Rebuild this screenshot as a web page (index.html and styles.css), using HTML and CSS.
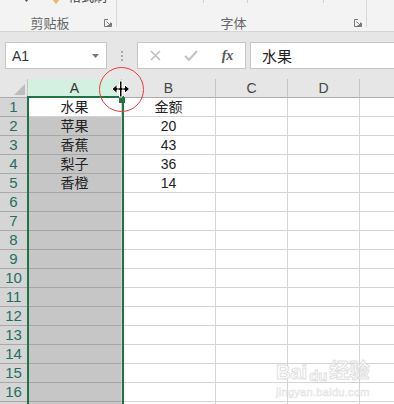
FILE: index.html
```html
<!DOCTYPE html>
<html lang="zh-CN">
  <head>
    <meta charset="UTF-8" />
    <meta name="viewport" content="width=device-width, initial-scale=1.0" />
    <title>Excel - 调整列宽</title>
    <link rel="stylesheet" href="styles.css">
  </head>
  <body>
    <div class="ribbon">
      <div class="group group-clip">
        <div class="group-top">
          <svg class="drop" width="5" height="3" viewBox="0 0 5 3"><polygon points="0,0 5,0 2.5,3" fill="#555"/></svg>
          <svg class="brush" width="8" height="6" viewBox="0 0 8 6"><polygon points="0,0 8,0 4,5" fill="#f2b65a"/></svg>
          <span class="top-label">格式刷</span>
        </div>
        <div class="group-foot">
          <span class="group-name">剪贴板</span>
          <span class="launcher">
            <svg width="8" height="8" viewBox="0 0 8 8"><path d="M0.5 4V0.5H4M0.5 4V7.5H7.5V4M2.5 2.5L6.5 6.5M6.5 3.5V6.5H3.5" fill="none" stroke="#777" stroke-width="1"/></svg>
          </span>
        </div>
      </div>
      <div class="group group-font">
        <div class="ticks">
          <span class="tick t1"></span>
          <span class="tick t2"></span>
          <span class="tick t3"></span>
        </div>
        <div class="group-foot">
          <span class="group-name">字体</span>
          <span class="launcher">
            <svg width="8" height="8" viewBox="0 0 8 8"><path d="M0.5 4V0.5H4M0.5 4V7.5H7.5V4M2.5 2.5L6.5 6.5M6.5 3.5V6.5H3.5" fill="none" stroke="#777" stroke-width="1"/></svg>
          </span>
        </div>
      </div>
    </div>

    <div class="formula-bar">
      <div class="name-box">
        <span>A1</span>
        <svg width="7" height="4" viewBox="0 0 7 4"><polygon points="0,0 7,0 3.5,4" fill="#777"/></svg>
      </div>
      <div class="splitter">
        <span class="dot"></span>
        <span class="dot"></span>
        <span class="dot"></span>
      </div>
      <div class="fx-buttons">
        <span class="fx-btn">
          <svg width="11" height="11" viewBox="0 0 11 11"><path d="M1 1L10 10M10 1L1 10" stroke="#bdbdbd" stroke-width="1.5"/></svg>
        </span>
        <span class="fx-btn">
          <svg width="14" height="11" viewBox="0 0 14 11"><polyline points="1,6 5,10 13,1" fill="none" stroke="#c2c2c2" stroke-width="2"/></svg>
        </span>
        <span class="fx-btn fx-label">fx</span>
      </div>
      <div class="formula-input">水果</div>
    </div>

    <div class="sheet">
      <div class="row head">
        <div class="cell rh corner">
          <svg width="11" height="11" viewBox="0 0 11 11"><polygon points="11,0 11,11 0,11" fill="#bdbdbd"/></svg>
        </div>
        <div class="cell col-a sel-head">A</div>
        <div class="cell col-b">B</div>
        <div class="cell col-c">C</div>
        <div class="cell col-d">D</div>
        <div class="cell col-e">E</div>
      </div>
      <div class="row">
        <div class="cell rh">1</div>
        <div class="cell col-a active">水果</div>
        <div class="cell col-b">金额</div>
        <div class="cell col-c"></div>
        <div class="cell col-d"></div>
        <div class="cell col-e"></div>
      </div>
      <div class="row">
        <div class="cell rh">2</div>
        <div class="cell col-a sel">苹果</div>
        <div class="cell col-b">20</div>
        <div class="cell col-c"></div>
        <div class="cell col-d"></div>
        <div class="cell col-e"></div>
      </div>
      <div class="row">
        <div class="cell rh">3</div>
        <div class="cell col-a sel">香蕉</div>
        <div class="cell col-b">43</div>
        <div class="cell col-c"></div>
        <div class="cell col-d"></div>
        <div class="cell col-e"></div>
      </div>
      <div class="row">
        <div class="cell rh">4</div>
        <div class="cell col-a sel">梨子</div>
        <div class="cell col-b">36</div>
        <div class="cell col-c"></div>
        <div class="cell col-d"></div>
        <div class="cell col-e"></div>
      </div>
      <div class="row">
        <div class="cell rh">5</div>
        <div class="cell col-a sel">香橙</div>
        <div class="cell col-b">14</div>
        <div class="cell col-c"></div>
        <div class="cell col-d"></div>
        <div class="cell col-e"></div>
      </div>
      <div class="row">
        <div class="cell rh">6</div>
        <div class="cell col-a sel"></div>
        <div class="cell col-b"></div>
        <div class="cell col-c"></div>
        <div class="cell col-d"></div>
        <div class="cell col-e"></div>
      </div>
      <div class="row">
        <div class="cell rh">7</div>
        <div class="cell col-a sel"></div>
        <div class="cell col-b"></div>
        <div class="cell col-c"></div>
        <div class="cell col-d"></div>
        <div class="cell col-e"></div>
      </div>
      <div class="row">
        <div class="cell rh">8</div>
        <div class="cell col-a sel"></div>
        <div class="cell col-b"></div>
        <div class="cell col-c"></div>
        <div class="cell col-d"></div>
        <div class="cell col-e"></div>
      </div>
      <div class="row">
        <div class="cell rh">9</div>
        <div class="cell col-a sel"></div>
        <div class="cell col-b"></div>
        <div class="cell col-c"></div>
        <div class="cell col-d"></div>
        <div class="cell col-e"></div>
      </div>
      <div class="row">
        <div class="cell rh">10</div>
        <div class="cell col-a sel"></div>
        <div class="cell col-b"></div>
        <div class="cell col-c"></div>
        <div class="cell col-d"></div>
        <div class="cell col-e"></div>
      </div>
      <div class="row">
        <div class="cell rh">11</div>
        <div class="cell col-a sel"></div>
        <div class="cell col-b"></div>
        <div class="cell col-c"></div>
        <div class="cell col-d"></div>
        <div class="cell col-e"></div>
      </div>
      <div class="row">
        <div class="cell rh">12</div>
        <div class="cell col-a sel"></div>
        <div class="cell col-b"></div>
        <div class="cell col-c"></div>
        <div class="cell col-d"></div>
        <div class="cell col-e"></div>
      </div>
      <div class="row">
        <div class="cell rh">13</div>
        <div class="cell col-a sel"></div>
        <div class="cell col-b"></div>
        <div class="cell col-c"></div>
        <div class="cell col-d"></div>
        <div class="cell col-e"></div>
      </div>
      <div class="row">
        <div class="cell rh">14</div>
        <div class="cell col-a sel"></div>
        <div class="cell col-b"></div>
        <div class="cell col-c"></div>
        <div class="cell col-d"></div>
        <div class="cell col-e"></div>
      </div>
      <div class="row">
        <div class="cell rh">15</div>
        <div class="cell col-a sel"></div>
        <div class="cell col-b"></div>
        <div class="cell col-c"></div>
        <div class="cell col-d"></div>
        <div class="cell col-e"></div>
      </div>
      <div class="row">
        <div class="cell rh">16</div>
        <div class="cell col-a sel"></div>
        <div class="cell col-b"></div>
        <div class="cell col-c"></div>
        <div class="cell col-d"></div>
        <div class="cell col-e"></div>
      </div>
      <div class="row">
        <div class="cell rh">17</div>
        <div class="cell col-a sel"></div>
        <div class="cell col-b"></div>
        <div class="cell col-c"></div>
        <div class="cell col-d"></div>
        <div class="cell col-e"></div>
      </div>

      <!-- selection outline over column A -->
      <div class="selection"></div>
      <div class="fill-handle"></div>

      <div class="watermark">
        <div class="wm-logo"><span>Bai</span><span class="wm-du">du</span><span>经验</span></div>
        <div class="wm-url">jingyan.baidu.com</div>
      </div>
    </div>

    <!-- annotation: resize cursor and red circle -->
    <div class="mark"></div>
    <svg class="resize-cursor" width="20" height="18" viewBox="0 0 20 18">
      <path d="M1 9L6 4.5V8H8.5V1H11V8H13.5V4.5L18.5 9L13.5 13.5V10H11V17H8.5V10H6V13.5Z" fill="#000" stroke="#fff" stroke-width="1"/>
    </svg>
  </body>
</html>
```

FILE: styles.css
```css
* {
  box-sizing: border-box;
}
body {
  margin: 0;
  width: 394px;
  height: 404px;
  overflow: hidden;
  position: relative;
  background: #e6e6e6;
  font-family: "Liberation Sans", "Noto Sans CJK SC", sans-serif;
  color: #222;
}

/* ribbon */
.ribbon {
  height: 32px;
  display: flex;
  background: #f3f3f3;
  border-bottom: 1px solid #d5d5d5;
}
.group {
  height: 27px;
  display: flex;
  flex-direction: column;
  border-right: 1px solid #d8d8d8;
}
.group-clip {
  width: 117px;
}
.group-font {
  width: 250px;
}
.group-top {
  height: 4px;
  display: flex;
  align-items: flex-end;
}
.drop {
  margin-left: 24px;
  margin-bottom: 2px;
}
.brush {
  margin-left: 23px;
  margin-bottom: -1px;
}
.top-label {
  margin-left: 8px;
  font-size: 13px;
  line-height: 14px;
  color: #444;
}
.ticks {
  height: 3px;
  display: flex;
}
.tick {
  height: 3px;
  border-right: 1px solid #cfcfcf;
}
.t1 {
  width: 87px;
}
.t2 {
  width: 44px;
}
.t3 {
  width: 76px;
}
.group-foot {
  margin-top: auto;
  margin-bottom: -4px;
  height: 18px;
  display: flex;
  align-items: center;
}
.group-name {
  flex: 1;
  text-align: center;
  font-size: 13px;
  color: #666;
}
.launcher {
  width: 16px;
  padding-left: 4px;
  display: flex;
  align-items: center;
  margin-top: 2px;
}

/* formula bar */
.formula-bar {
  height: 47px;
  display: flex;
  padding: 10px 0 10px 5px;
}
.name-box {
  width: 102px;
  display: flex;
  align-items: center;
  justify-content: space-between;
  padding: 0 7px 0 6px;
  background: #fff;
  border: 1px solid #c6c6c6;
  font-size: 14px;
  color: #333;
}
.splitter {
  width: 30px;
  display: flex;
  flex-direction: column;
  align-items: center;
  justify-content: center;
  gap: 2px;
}
.dot {
  width: 2px;
  height: 2px;
  background: #a9a9a9;
}
.fx-buttons {
  width: 109px;
  display: flex;
  background: #fff;
  border: 1px solid #c6c6c6;
}
.fx-btn {
  flex: 1;
  display: flex;
  align-items: center;
  justify-content: center;
}
.fx-label {
  font-family: "Liberation Serif", serif;
  font-style: italic;
  font-weight: bold;
  font-size: 14px;
  color: #555;
  padding-left: 2px;
}
.formula-input {
  flex: 1;
  margin-left: 4px;
  padding-left: 11px;
  display: flex;
  align-items: center;
  background: #fff;
  border: 1px solid #c6c6c6;
  border-right: none;
  font-size: 15px;
  color: #222;
}

/* sheet grid */
.sheet {
  position: relative;
  height: 325px;
  overflow: hidden;
  background: #fff;
}
.row {
  display: flex;
  height: 19px;
}
.cell {
  flex: none;
  height: 19px;
  line-height: 18px;
  text-align: center;
  font-size: 14px;
  border-right: 1px solid #d4d4d4;
  border-bottom: 1px solid #d4d4d4;
  overflow: hidden;
  white-space: nowrap;
}
.rh {
  width: 28px;
  background: #d5d5d5;
  color: #1f6f62;
  font-size: 15px;
  border-right-color: #ababab;
  border-bottom-color: #a9a9a9;
}
.col-a,
.col-b {
  width: 94px;
}
.col-c,
.col-d,
.col-e {
  width: 72px;
}
.head .cell {
  background: #e6e6e6;
  color: #444;
  border-right-color: #c4c4c4;
  border-bottom-color: #ababab;
}
.head .col-e {
  padding-left: 8px;
  color: #a0632a;
}
.head .corner {
  display: flex;
  align-items: flex-end;
  justify-content: flex-end;
  padding: 0 2px 2px 0;
  border-right-color: #c4c4c4;
}
.head .sel-head {
  background: #d3f0e0;
  color: #333;
}
.sel {
  background: #c6c6c6;
  border-bottom-color: #a6a6a6;
}
.active {
  background: #fff;
}
.selection {
  position: absolute;
  left: 27px;
  top: 17px;
  width: 97px;
  height: 400px;
  border: 2px solid #217346;
}
.fill-handle {
  position: absolute;
  left: 119px;
  top: 18px;
  width: 6px;
  height: 6px;
  background: #217346;
}

/* watermark */
.watermark {
  position: absolute;
  left: 276px;
  top: 276px;
  color: #fff;
  opacity: 0.8;
}
.wm-logo {
  display: flex;
  align-items: flex-end;
  gap: 2px;
  font-size: 20px;
  font-weight: bold;
  -webkit-text-stroke: 1px #d9d9d9;
}
.wm-du {
  font-size: 15px;
}
.wm-url {
  margin-top: 2px;
  font-size: 11px;
  -webkit-text-stroke: 0.6px #dcdcdc;
  letter-spacing: 0.3px;
}

/* annotation */
.mark {
  position: absolute;
  left: 99px;
  top: 67px;
  width: 45px;
  height: 45px;
  border: 1.5px solid #ec3b3b;
  border-radius: 50%;
}
.resize-cursor {
  position: absolute;
  left: 111px;
  top: 80px;
}
```
